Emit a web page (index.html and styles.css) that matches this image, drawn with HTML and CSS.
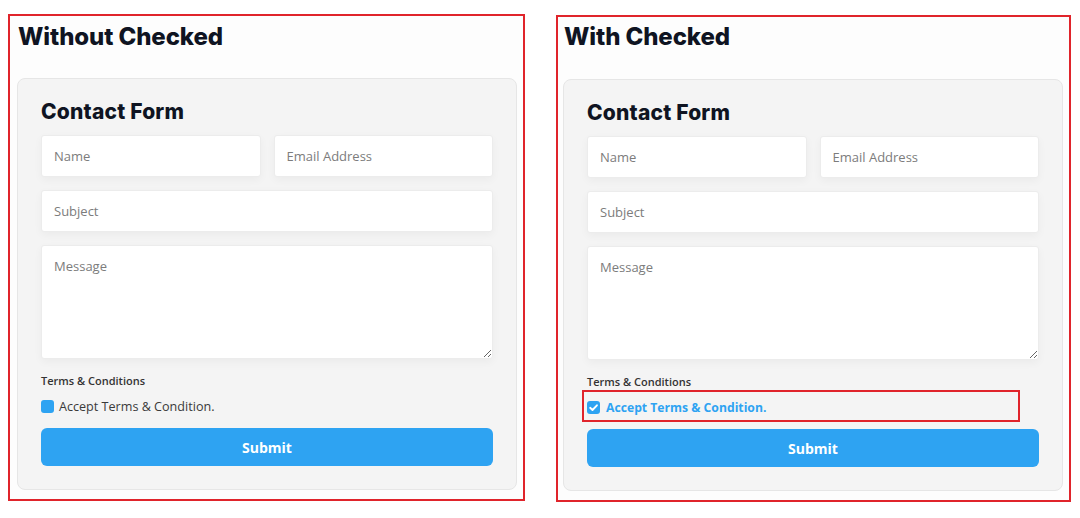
FILE: index.html
```html
<!DOCTYPE html>
<html lang="en">
<head>
<meta charset="utf-8">
<title>Contact Form – Checkbox States</title>
<link rel="stylesheet" href="styles.css">
</head>
<body>
<main class="page">
  <section class="demo demo--left">
    <h2 class="demo-title">Without Checked</h2>
    <form class="card">
      <h3 class="card-title">Contact Form</h3>
      <div class="row-2">
        <input class="field" type="text" placeholder="Name">
        <input class="field" type="email" placeholder="Email Address">
      </div>
      <input class="field" type="text" placeholder="Subject">
      <textarea class="field field--area" placeholder="Message"></textarea>
      <div class="terms-label">Terms &amp; Conditions</div>
      <label class="accept">
        <span class="box"></span>
        <span class="accept-text">Accept Terms &amp; Condition.</span>
      </label>
      <button class="submit" type="button">Submit</button>
    </form>
  </section>
  <section class="demo demo--right">
    <h2 class="demo-title">With Checked</h2>
    <form class="card">
      <h3 class="card-title">Contact Form</h3>
      <div class="row-2">
        <input class="field" type="text" placeholder="Name">
        <input class="field" type="email" placeholder="Email Address">
      </div>
      <input class="field" type="text" placeholder="Subject">
      <textarea class="field field--area" placeholder="Message"></textarea>
      <div class="terms-label">Terms &amp; Conditions</div>
      <label class="accept accept--checked">
        <span class="box box--checked">
          <svg viewBox="0 0 14 14" width="14" height="14" aria-hidden="true"><path d="M3.4 7.3 L5.9 9.7 L10.7 4.6" fill="none" stroke="#fff" stroke-width="2" stroke-linecap="round" stroke-linejoin="round"/></svg>
        </span>
        <span class="accept-text">Accept Terms &amp; Condition.</span>
        <span class="highlight"></span>
      </label>
      <button class="submit" type="button">Submit</button>
    </form>
  </section>
</main>
</body>
</html>
```

FILE: styles.css
```css
* { box-sizing: border-box; }

html, body {
  margin: 0;
  background: #ffffff;
}

body {
  font-family: "Open Sans", "Liberation Sans", sans-serif;
  color: #333;
}

.page {
  display: flex;
  align-items: flex-start;
  gap: 31px;
  padding: 14px 0 0 8px;
}

.demo {
  border: 2px solid #e0242b;
  background: #fdfdfd;
  height: 487px;
}

.demo--left {
  width: 517px;
  padding: 6px 6px 0 7px;
}

.demo--right {
  width: 515px;
  padding: 5px 6px 0 5px;
  margin-top: 1px;
}

.demo-title {
  margin: 0 0 26px 1px;
  font-family: "Inter", "Liberation Sans", sans-serif;
  font-weight: 800;
  font-size: 24px;
  line-height: 30px;
  color: #0f1422;
  letter-spacing: -0.1px;
}

.demo--right .demo-title { margin-bottom: 27px; }

.card {
  background: #f4f4f4;
  border: 1px solid #e6e6e6;
  border-radius: 8px;
  padding: 18px 23px 23px 23px;
  display: flex;
  flex-direction: column;
}

.card-title {
  margin: 0 0 8px;
  font-family: "Inter", "Liberation Sans", sans-serif;
  font-weight: 800;
  font-size: 21px;
  line-height: 30px;
  color: #0f1422;
  letter-spacing: 0.2px;
}

.row-2 {
  display: grid;
  grid-template-columns: 1fr 1fr;
  gap: 13px;
  margin-bottom: 13px;
}

.field {
  display: block;
  width: 100%;
  height: 42px;
  border: 1px solid #ececec;
  border-radius: 3px;
  background: #ffffff;
  box-shadow: 0 3px 8px rgba(0, 0, 0, 0.04);
  padding: 0 12px;
  font-family: "Open Sans", "Liberation Sans", sans-serif;
  font-size: 13px;
  color: #555;
  outline: none;
  margin: 0 0 13px;
}

.field::placeholder { color: #7c7c7c; }

.row-2 .field { margin: 0; }

.field--area {
  height: 114px;
  padding: 11px 12px;
  line-height: 19px;
  resize: vertical;
  margin-bottom: 14px;
}

.terms-label {
  font-size: 11px;
  font-weight: 600;
  line-height: 16px;
  color: #333;
}

.accept {
  position: relative;
  display: flex;
  align-items: center;
  gap: 5px;
  height: 20px;
  margin: 7px 0 12px;
  font-size: 12.6px;
  color: #3a3a3a;
}

.box {
  flex: 0 0 auto;
  width: 13px;
  height: 13px;
  border-radius: 3px;
  background: #2ea3f2;
  display: flex;
  align-items: center;
  justify-content: center;
}

.box svg { width: 13px; height: 13px; }

.accept--checked { color: #2ea3f2; font-weight: 700; gap: 6px; font-size: 12.2px; }

.highlight {
  position: absolute;
  left: -5px;
  top: -7px;
  width: 438px;
  height: 32px;
  border: 2px solid #e0242b;
  pointer-events: none;
}

.submit {
  display: block;
  width: 100%;
  height: 38px;
  border: 0;
  border-radius: 6px;
  background: #2ea3f2;
  color: #ffffff;
  font-family: "Open Sans", "Liberation Sans", sans-serif;
  font-weight: 700;
  font-size: 14px;
  cursor: pointer;
}
```
